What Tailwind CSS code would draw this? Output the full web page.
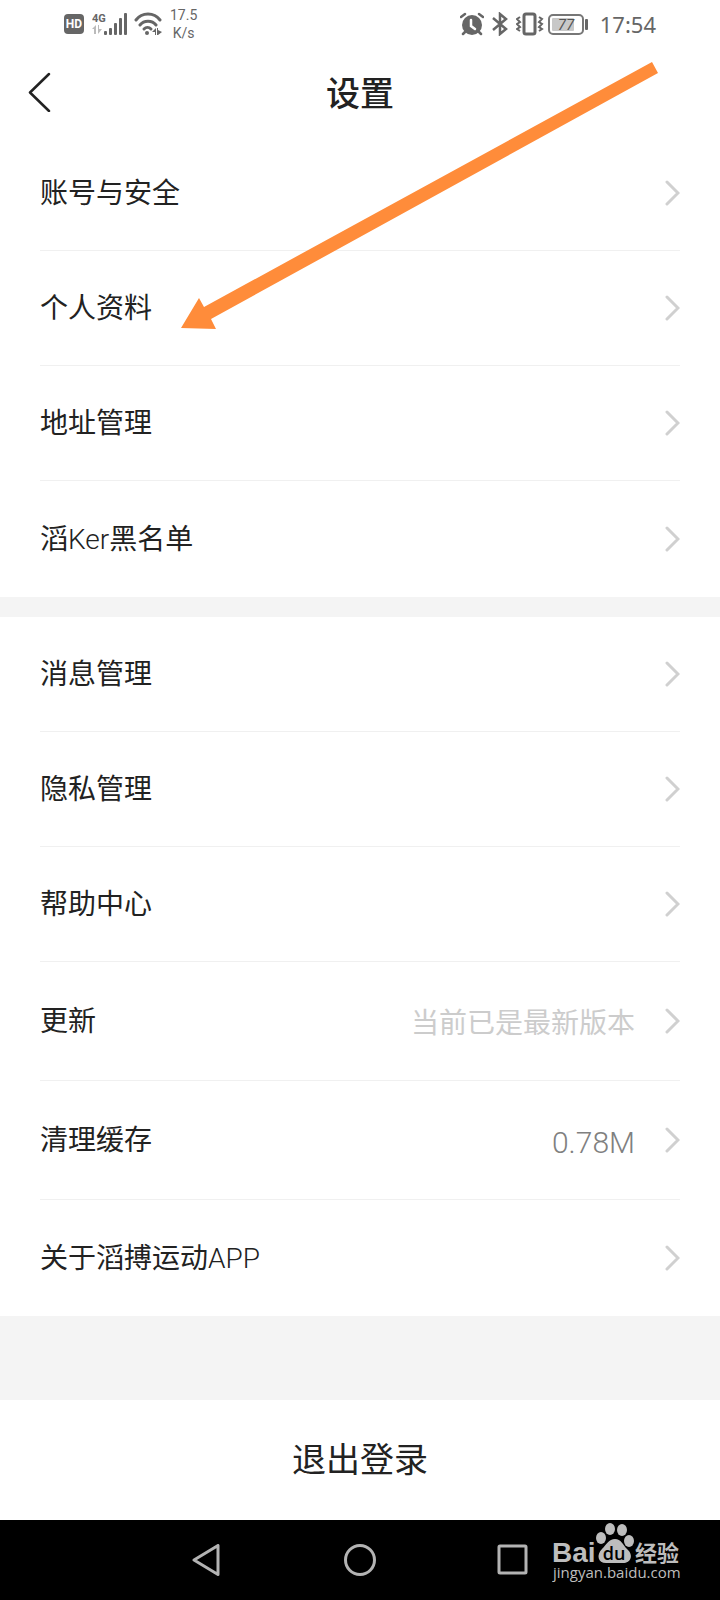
<!DOCTYPE html>
<html lang="zh-CN">
<head>
  <meta charset="UTF-8" />
  <meta name="viewport" content="width=device-width, initial-scale=1.0" />
  <title>设置</title>
  <script src="https://cdn.jsdelivr.net/npm/@tailwindcss/browser@4"></script>
</head>
<body class="relative min-h-screen flex flex-col bg-white text-[#222222] font-['Roboto','Noto_Sans_CJK_SC',sans-serif]">

  <!-- status bar -->
  <div class="h-12 flex items-center justify-between pl-16 pr-16 text-[#666666]">
    <div class="flex items-center">
      <svg class="w-5 h-5" viewBox="0 0 20 20">
        <rect width="20" height="20" rx="4" fill="#666" />
        <text x="10" y="14" text-anchor="middle" font-family="Roboto" font-size="12" font-weight="700" fill="#fff">HD</text>
      </svg>
      <svg class="w-9 h-6 ml-2" viewBox="0 0 36 24" fill="#666">
        <text x="0" y="10" font-family="Roboto" font-size="11" font-weight="700">4G</text>
        <path d="M0 17l4-4v9H2v-5zM6 13h1v4h3l-4 5z" fill="#bbb" />
        <rect x="12" y="19" width="3" height="4" rx="1" />
        <rect x="17" y="16" width="3" height="7" rx="1" />
        <rect x="22" y="11" width="3" height="12" rx="1" />
        <rect x="27" y="6" width="3" height="17" rx="1" />
        <rect x="32" y="1" width="3" height="22" rx="1" />
      </svg>
      <svg class="w-7 h-6 ml-1.5" viewBox="0 0 28 24" fill="none" stroke="#666" stroke-width="3" stroke-linecap="round">
        <path d="M2 8c6-8 18-8 24 0M6 13c4-5 12-5 16 0" />
        <path d="M10 17c2-2 5-2 7 0" />
        <circle cx="13" cy="21" r="2" fill="#666" stroke="none" />
        <path d="M18 20l4-4v7h-1v-3zM23 16h1v2l4 2-4 3h-1z" fill="#666" stroke="none" />
      </svg>
      <div class="ml-2 text-sm leading-[18px] text-center">
        <div>17.5</div>
        <div>K/s</div>
      </div>
    </div>
    <div class="flex items-center">
      <svg class="w-6 h-6" viewBox="0 0 24 24" fill="none" stroke="#666" stroke-linecap="round">
        <circle cx="12" cy="13" r="10" fill="#666" stroke="none" />
        <path d="M1 5l4-3M19 2l4 3M5 20l-2 2M19 20l2 2" stroke-width="2.5" />
        <path d="M11 8v6l4 3" stroke="#fff" stroke-width="2.5" />
      </svg>
      <svg class="w-4 h-6 ml-2" viewBox="0 0 16 24" fill="none" stroke="#666" stroke-width="2.5">
        <path d="M1 6l13 11-6 5V2l6 5L1 18" />
      </svg>
      <svg class="w-7 h-6 ml-2" viewBox="0 0 28 24" fill="none" stroke="#666" stroke-width="2">
        <rect x="8" y="2" width="11" height="20" rx="2" stroke-width="3" />
        <path d="M4 5L1 7l3 3-3 2 3 3-3 2 3 2M23 5l3 2-3 3 3 2-3 3 3 2-3 2" />
      </svg>
      <svg class="w-10 h-6 ml-1" viewBox="0 0 40 24">
        <rect x="1" y="3" width="34" height="19" rx="4" fill="none" stroke="#777" stroke-width="2" />
        <rect x="4" y="6" width="22" height="13" rx="1" fill="#c8c8c8" />
        <rect x="37" y="7" width="3" height="11" rx="1" fill="#666" />
        <text x="18" y="18" text-anchor="middle" font-family="Roboto" font-size="15" font-style="italic" fill="#555">77</text>
      </svg>
      <span class="ml-3 text-[22px] font-['Noto_Sans',sans-serif]">17:54</span>
    </div>
  </div>

  <!-- title bar -->
  <header class="h-[88px] grid grid-cols-[80px_1fr_80px] items-center pt-1">
    <button type="button" aria-label="返回" class="pl-7 pb-1">
      <svg class="w-6 h-10" viewBox="0 0 24 40" fill="none" stroke="#222" stroke-width="2.5" stroke-linecap="round" stroke-linejoin="round">
        <path d="M21 2L2 20.500l19 18.500" />
      </svg>
    </button>
    <h1 class="text-center text-[34px] font-medium">设置</h1>
  </header>

  <main class="flex-1 flex flex-col bg-[#f4f4f4] text-[28px] leading-10">
    <ul id="account" class="bg-white px-10"></ul>
    <ul id="general" class="bg-white px-10 mt-5"></ul>
    <button type="button" class="mt-[84px] h-[120px] bg-white text-[34px]">退出登录</button>
  </main>

  <!-- system navigation -->
  <nav class="relative h-20 flex items-center justify-center gap-[121px] bg-black">
    <button type="button" aria-label="后退">
      <svg class="w-8 h-8" viewBox="0 0 32 32" fill="none" stroke="#b3b3b3" stroke-width="3" stroke-linejoin="round">
        <path d="M3 16L27 1.500v29z" />
      </svg>
    </button>
    <button type="button" aria-label="主屏幕">
      <svg class="w-8 h-8" viewBox="0 0 32 32" fill="none" stroke="#b3b3b3" stroke-width="3">
        <circle cx="16" cy="16" r="14.500" />
      </svg>
    </button>
    <button type="button" aria-label="最近任务">
      <svg class="w-8 h-8" viewBox="0 0 32 32" fill="none" stroke="#b3b3b3" stroke-width="3">
        <rect x="2" y="2" width="27" height="27" rx="1" />
      </svg>
    </button>
    <svg class="absolute right-9 top-0 w-[132px] h-20" viewBox="0 0 132 80" fill="#bdbdbd">
      <text x="0" y="42" font-family="Liberation Sans" font-size="28" font-weight="700">Bai</text>
      <ellipse cx="49" cy="18" rx="5" ry="6" />
      <ellipse cx="58" cy="9" rx="5" ry="6" />
      <ellipse cx="70" cy="10" rx="5" ry="6" />
      <ellipse cx="77" cy="21" rx="5" ry="6" />
      <path d="M63 19c6 0 8 6 12 10 7 6 4 14-4 14H54c-8 0-10-8-4-14 4-4 7-10 13-10z" />
      <text x="62" y="40" text-anchor="middle" font-family="Open Sans" font-size="18" font-weight="600" fill="#000">du</text>
      <text x="83" y="41" font-family="Noto Sans CJK SC" font-size="22" font-weight="700">经验</text>
      <text x="1" y="58" font-family="Open Sans" font-size="15" font-weight="500">jingyan.baidu.com</text>
    </svg>
  </nav>

  <!-- pointer to the profile row -->
  <svg class="absolute left-[181px] top-[62px] w-[478px] h-[267px] pointer-events-none" viewBox="0 0 478 267" fill="#ff8c3a">
    <path d="M471 0l6 11L30 257l5 10L0 266l18-30 5 9z" />
  </svg>

  <script>
    const account = [
      { label: "账号与安全" },
      { label: "个人资料" },
      { label: "地址管理" },
      { label: '滔<span class="font-light">Ker</span>黑名单' }
    ];

    const general = [
      { label: "消息管理" },
      { label: "隐私管理" },
      { label: "帮助中心" },
      { label: "更新", value: "当前已是最新版本", valueClass: "text-[#cccccc]" },
      { label: "清理缓存", value: "0.78M", valueClass: "text-[30px] font-light text-[#808080]" },
      { label: '关于滔搏运动<span class="font-light">APP</span>' }
    ];

    function renderList(id, items) {
      document.getElementById(id).innerHTML = items.map((item, i) => `
        <li class="${i < items.length - 1 ? "border-b border-[#f0f0f0]" : ""}">
          <a href="#" class="flex items-center ${item.value ? "h-[118px]" : i < items.length - 1 ? "h-[114px]" : "h-[116px]"}">
            <span class="flex-1 pt-0.5">${item.label}</span>
            ${item.value ? `<span class="mr-[27px] pt-1.5 ${item.valueClass}">${item.value}</span>` : ""}
            <svg class="w-[18px] h-7" viewBox="0 0 18 28" fill="none" stroke="#d0d0d0" stroke-width="3" stroke-linecap="round">
              <path d="M5 3l11 11L5 25" />
            </svg>
          </a>
        </li>
      `).join("");
    }

    renderList("account", account);
    renderList("general", general);
  </script>
</body>
</html>
